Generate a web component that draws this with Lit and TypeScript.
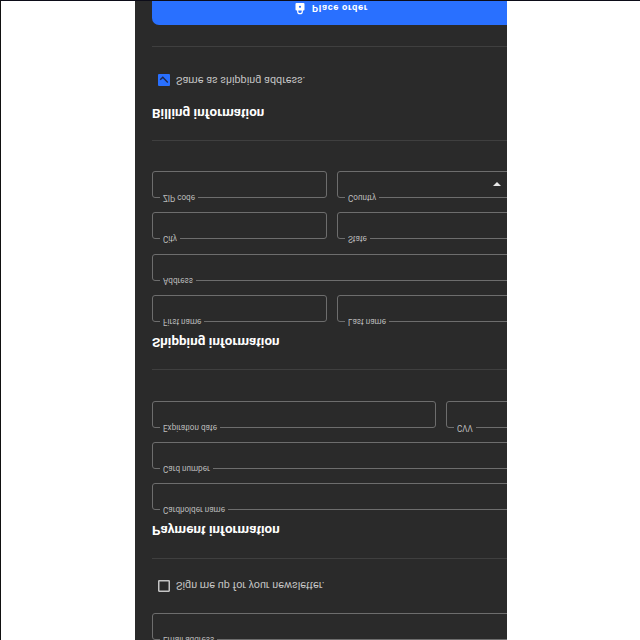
import { LitElement, html, css } from "lit";
import { customElement, property } from "lit/decorators.js";

@customElement("outlined-field")
class OutlinedField extends LitElement {
  @property() label = "";
  @property({ type: Boolean }) select = false;
  static styles = css`
    :host { display: block; position: relative; box-sizing: border-box; height: 27px; border: 1px solid #6d6d6d; border-radius: 3px; }
    .label { position: absolute; left: 7px; top: -6px; padding: 0 3px; background: #2a2a2a; color: #bdbdbd; font-size: 8.15px; line-height: 11px; white-space: nowrap; }
    .arrow { position: absolute; left: 155px; top: 11px; border: 4px solid transparent; border-top-color: #e8e8e8; border-bottom: 0; }
  `;
  render() {
    return html`<span class="label">${this.label}</span>${this.select ? html`<i class="arrow"></i>` : ""}`;
  }
}

@customElement("check-row")
class CheckRow extends LitElement {
  @property() label = "";
  @property({ type: Boolean }) checked = false;
  static styles = css`
    :host { display: flex; align-items: center; height: 20px; padding-left: 4px; gap: 4px; color: #c4c4c4; font-size: 10.8px; letter-spacing: .01px; }
    svg { width: 16px; height: 16px; }
    span { white-space: nowrap; }
  `;
  render() {
    return html`<svg viewBox="0 0 16 16">
        ${this.checked
          ? html`<svg viewBox="0 0 16 16"><rect x="2" y="2" width="12" height="12" rx="1" fill="#2970ff" /><path d="M4.2 8.2l2.6 2.6 5-5.2" fill="none" stroke="#20294a" stroke-width="1.4" /></svg>`
          : html`<svg viewBox="0 0 16 16"><rect x="2.75" y="2.75" width="10.5" height="10.5" rx=".4" fill="none" stroke="#c4c4c4" stroke-width="1.5" /></svg>`}
      </svg><span>${this.label}</span>`;
  }
}

@customElement("app-root")
class AppRoot extends LitElement {
  static styles = css`
    :host { display: block; box-sizing: border-box; width: 640px; height: 640px; overflow: hidden; background: #fff; border-top: 1px solid #0c0c18; border-left: 1px solid #111; font-family: Roboto, "Liberation Sans", sans-serif; }
    .panel { box-sizing: border-box; width: 372px; height: 640px; margin: -1px 0 0 134px; padding-left: 17px; overflow: hidden; background: #2a2a2a; transform: scaleY(-1); clip-path: inset(0 0 1px 0); }
    .form { width: 372px; display: flex; flex-direction: column; }
    hr { width: 100%; height: 1px; margin: 0; border: 0; background: #3f3f3f; }
    h2 { margin: 0; height: 20px; line-height: 20px; color: #fff; font-size: 13.4px; letter-spacing: .05px; font-weight: 700; white-space: nowrap; }
    .fields { display: flex; flex-direction: column; gap: 14px; }
    .address { gap: 14.33px; }
    .pair { display: grid; grid-template-columns: 175px 190px; gap: 10px; }
    .expiry { grid-template-columns: 284px 90px; }
    .news { margin: 17px 0; }
    .news + hr { margin-bottom: 18px; }
    .payment { margin: 10px 0 31px; }
    .shipping { margin: 10px 0 30px; }
    .ship-title { margin-top: 17px; }
    .bill-title { margin-top: 17px; }
    .same { margin: 13px 0 23px; }
    .order { height: 40px; margin-top: 21px; border-radius: 7px; background: #2970ff; color: #fff; font-size: 9.4px; font-weight: 700; letter-spacing: .7px; display: flex; align-items: flex-start; padding: 10px 0 0 142px; gap: 6px; line-height: 13px; }
    .order svg { width: 12px; height: 13px; }
  `;
  render() {
    return html`<main class="panel"><div class="form">
      <outlined-field label="Email address"></outlined-field>
      <check-row class="news" label="Sign me up for your newsletter."></check-row>
      <hr />
      <h2>Payment information</h2>
      <div class="fields payment">
        <outlined-field label="Cardholder name"></outlined-field>
        <outlined-field label="Card number"></outlined-field>
        <div class="pair expiry">
          <outlined-field label="Expiration date"></outlined-field>
          <outlined-field label="CVV"></outlined-field>
        </div>
      </div>
      <hr />
      <h2 class="ship-title">Shipping information</h2>
      <div class="fields address shipping">
        <div class="pair">
          <outlined-field label="First name"></outlined-field>
          <outlined-field label="Last name"></outlined-field>
        </div>
        <outlined-field label="Address"></outlined-field>
        <div class="pair">
          <outlined-field label="City"></outlined-field>
          <outlined-field label="State"></outlined-field>
        </div>
        <div class="pair">
          <outlined-field label="ZIP code"></outlined-field>
          <outlined-field label="Country" select></outlined-field>
        </div>
      </div>
      <hr />
      <h2 class="bill-title">Billing information</h2>
      <check-row class="same" label="Same as shipping address." checked></check-row>
      <hr />
      <div class="order">
        <svg viewBox="0 0 12 13"><path d="M3.7 5V3.6a2.3 2.3 0 0 1 4.6 0V5" fill="none" stroke="#fff" stroke-width="1.2" /><rect x="1.5" y="4.5" width="9" height="7.4" rx="1" fill="#fff" /><circle cx="6" cy="8.2" r="1.1" fill="#2970ff" /></svg>
        Place order
      </div>
    </div></main>`;
  }
}
